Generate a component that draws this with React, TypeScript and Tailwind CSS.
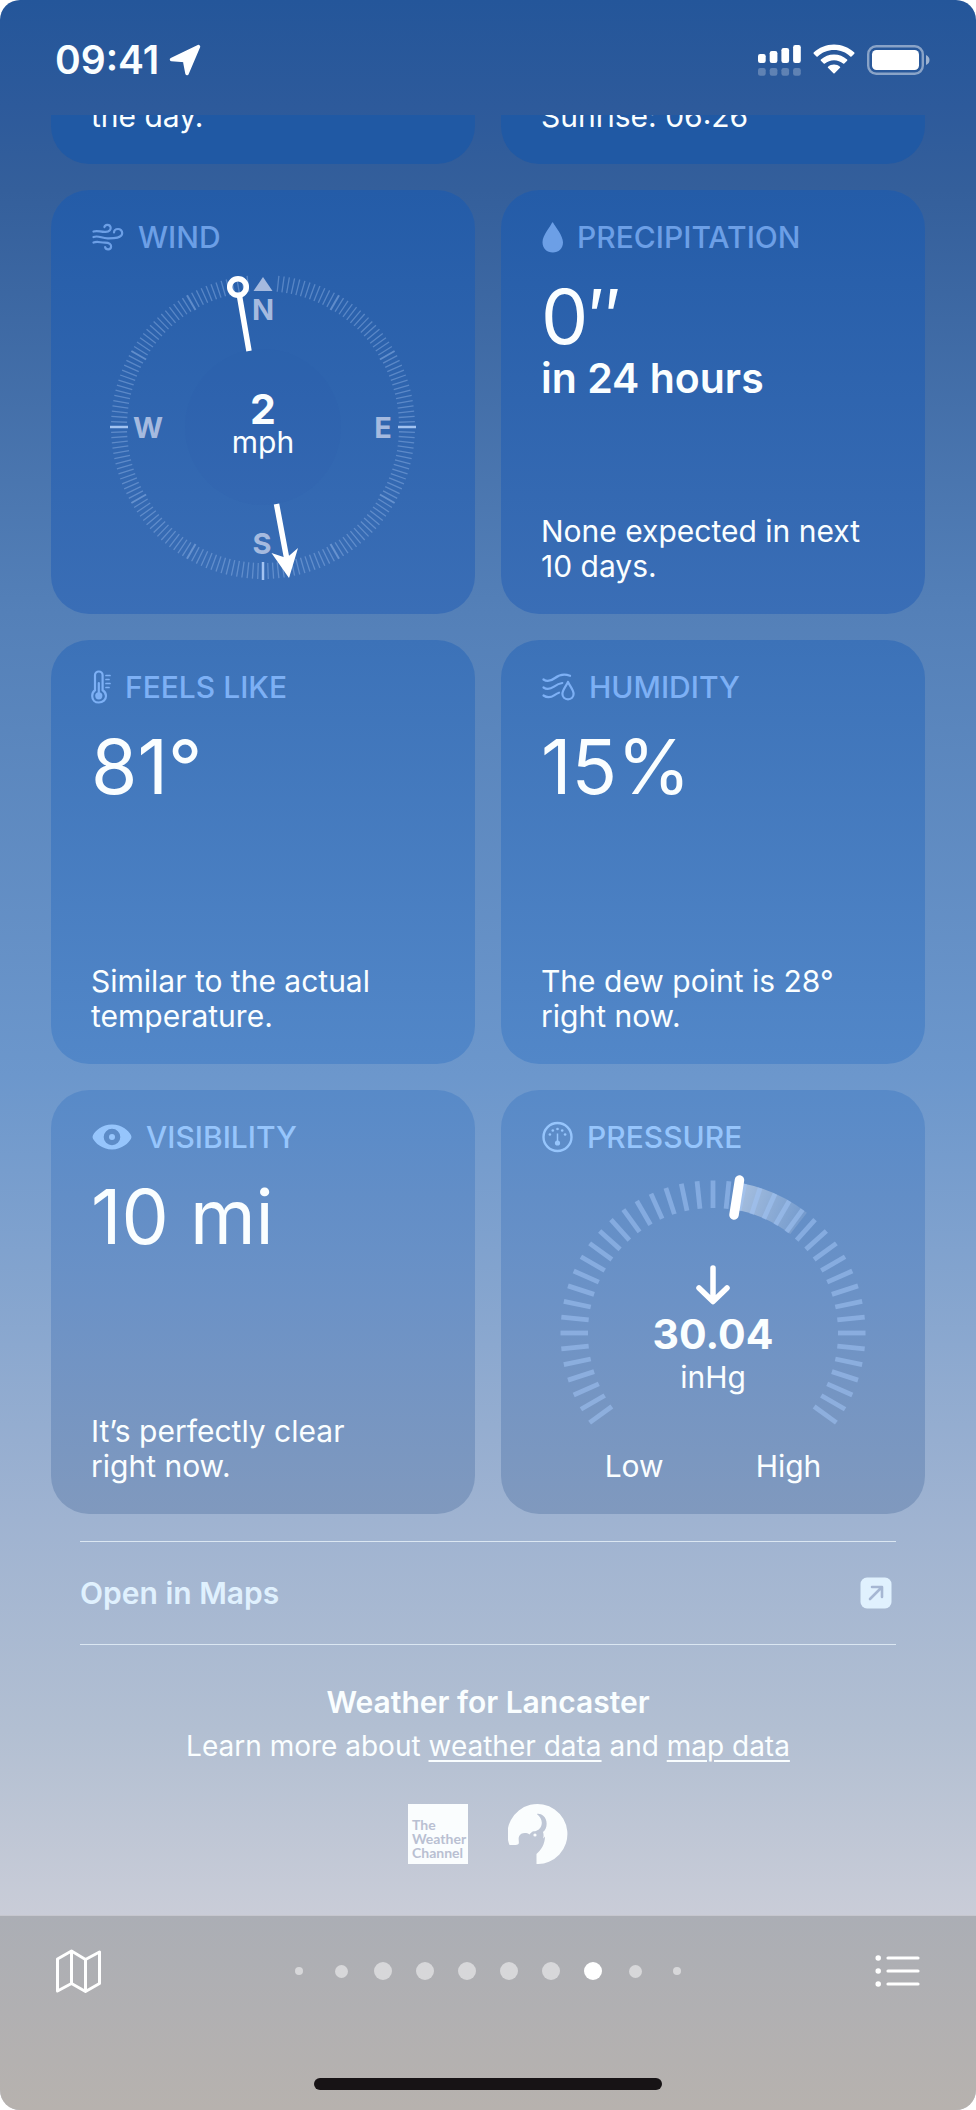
import type { ReactNode } from 'react'

type CardProps = {
  tone: string
  icon: ReactNode
  label: string
  labelColor: string
  children: ReactNode
}

type ReadingProps = {
  value: string
  note: string
  sub?: string
}

const point = (radius: number, degrees: number) => {
  const a = (degrees * Math.PI) / 180
  return [radius * Math.sin(a), -radius * Math.cos(a)]
}

function Tick({ angle, from, to, ...rest }: { angle: number; from: number; to: number; strokeWidth: number; opacity: number }) {
  const [x1, y1] = point(from, angle)
  const [x2, y2] = point(to, angle)
  return <line x1={x1} y1={y1} x2={x2} y2={y2} {...rest} />
}

/* ---------- icons ---------- */

function WindIcon() {
  return (
    <svg width="33" height="28" viewBox="0 0 33 28" fill="none" stroke="currentColor" strokeWidth="2.2" strokeLinecap="round">
      <path d="M2.5 8.6c4-1.6 7 .6 12 .3 4.4-.3 5.5-2.6 5.1-4.6-.4-1.8-2-2.6-3.5-2.5-1.4.1-2.4 1-2.7 2.3" />
      <path d="M2.5 14c5-1.9 8 1.3 14 1.4 7 .1 14.7-.4 14.7-5.3 0-2.5-1.900-4.100-4.200-4.100-2.200 0-3.900 1.500-4 3.500" />
      <path d="M2.5 19.600c4-1.700 6.500.1 11.500.1 4.500 0 6.300 1.800 6.100 4-.2 1.800-1.600 2.800-3.100 2.700-1.500 0-2.600-.9-2.900-2.300" />
    </svg>
  )
}

function DropIcon() {
  return (
    <svg width="22" height="31" viewBox="0 0 22 31" fill="currentColor">
      <path d="M12 .5C14 4.500 22 13.500 22 20.300C22 26.700 17.600 30.500 11.800 30.500S1.500 26.700 1.500 20.300C1.500 13.500 9.500 4.500 11 .8Q11.500 0 12 .5Z" />
    </svg>
  )
}

function ThermometerIcon() {
  return (
    <svg width="20" height="34" viewBox="1 0 20 34" fill="none" stroke="currentColor" strokeWidth="2.200" strokeLinecap="round">
      <path d="M5 20.200V5.200C5 3 6.700 1.500 8.800 1.500S12.600 3 12.600 5.200V20.200C14.900 21.600 16 23.500 16 25.900C16 29.700 12.800 32.500 8.800 32.500S2.200 29.700 2.200 25.900C2.200 23.500 2.800 21.600 5 20.200Z" />
      <path d="M8.800 13V23" />
      <circle cx="8.800" cy="25.800" r="3.600" fill="currentColor" stroke="none" />
      <path d="M16 5.500h4M16 9.500h3M16 13.500h4M16 17.500h3" strokeWidth="1.700" />
    </svg>
  )
}

function HumidityIcon() {
  return (
    <svg width="34" height="28" viewBox="0 0 34 28" fill="none" stroke="currentColor" strokeWidth="2.200" strokeLinecap="round" strokeLinejoin="round">
      <path d="M2.500 6.500c3.500 2.500 7.500 1.500 11.500-1.500 4.500-3.500 9-4.500 15-2.200" />
      <path d="M2.500 14.500c3.500 2.500 7 1.600 10.500-.8 2.800-2 5.300-3.300 8.300-3.700" />
      <path d="M2.500 22.500c4 2.700 7.500 2 11-.4 1.500-1 3-1.900 4.500-2.400" />
      <path d="M27 8.800c-1.600 4-5.600 8.300-5.600 12 0 3.300 2.400 5.500 5.600 5.500s5.600-2.200 5.600-5.500c0-3.700-4-8-5.600-12z" />
    </svg>
  )
}

function EyeIcon() {
  return (
    <svg width="41" height="26" viewBox="0 0 41 26">
      <path
        fill="currentColor"
        fillRule="evenodd"
        d="M21 .5C31 .5 38 7.200 40 11.200Q41 13 40 14.800C38 18.800 31 25.500 21 25.500S4 18.800 2 14.800Q1 13 2 11.200C4 7.200 11 .5 21 .5ZM21 4.700A8.300 8.300 0 1 0 21 21.300A8.300 8.300 0 1 0 21 4.700Z"
      />
      <circle cx="21" cy="13" r="3" fill="currentColor" />
    </svg>
  )
}

function GaugeIcon() {
  return (
    <svg width="32" height="32" viewBox="-17 -16 32 32" fill="none" stroke="currentColor" strokeWidth="2.400">
      <circle r="14" cx="-.5" />
      <path d="M-.5 -3.500V5" strokeWidth="1.500" />
      <circle cx="-.5" cy="6" r="2.600" fill="currentColor" stroke="none" />
      {[-72, -36, 0, 36, 72].map((a) => {
        const [x, y] = point(8, a)
        return <circle key={a} cx={x - 0.5} cy={y} r="1.300" fill="currentColor" stroke="none" />
      })}
    </svg>
  )
}

/* ---------- cards ---------- */

function Card({ tone, icon, label, labelColor, children }: CardProps) {
  return (
    <section className={`flex aspect-square flex-col rounded-[38px] px-10 pt-7 pb-[30px] ${tone}`}>
      <h2 className={`flex h-[38px] items-center gap-3.5 text-[30px] font-medium ${labelColor}`}>
        {icon}
        {label}
      </h2>
      {children}
    </section>
  )
}

function Reading({ value, note, sub }: ReadingProps) {
  return (
    <>
      <p className="mt-[21px] text-[75px] leading-[80px]">{value}</p>
      {sub && <p className="text-[41px] leading-[42px] font-semibold">{sub}</p>}
      <p className="mt-auto text-[30px] leading-[35px] whitespace-pre-line">{note}</p>
    </>
  )
}

function Compass() {
  const angles = Array.from({ length: 180 }, (_, i) => i * 2).filter((a) => a > 4 && a < 356)
  return (
    <div className="mt-[15px] grid place-items-center self-center">
      <svg className="col-start-1 row-start-1 size-[312px]" viewBox="-156 -156 312 312">
        <circle r="78" fill="#2459a6" opacity="0.07" />
        <g stroke="#a9c8f5">
          {angles.map((a) => {
            if (a % 90 === 0) return <Tick key={a} angle={a} from={135} to={153} strokeWidth={2.5} opacity={0.95} />
            if (a % 30 === 0) return <Tick key={a} angle={a} from={135} to={152} strokeWidth={2} opacity={0.42} />
            return <Tick key={a} angle={a} from={136} to={152} strokeWidth={1.3} opacity={0.36} />
          })}
        </g>
        <g fill="#a5badf" className="text-[29px] font-bold" textAnchor="middle">
          <path d="M0 -150L9.500 -136H-9.500Z" />
          <text x="0" y="-107">N</text>
          <text x="120" y="11">E</text>
          <text x="-1" y="127">S</text>
          <text x="-115" y="11">W</text>
        </g>
        <g stroke="white" strokeWidth="5.500" fill="none">
          <circle cx="-25" cy="-140" r="8.300" />
          <path d="M-23.500 -131L-14 -76M13.500 77L24 133" />
          <path d="M26 151L8.500 126L23.500 131L35 121Z" fill="white" stroke="none" />
        </g>
      </svg>
      <p className="col-start-1 row-start-1 flex flex-col items-center pb-1.5">
        <span className="text-[41px] leading-[36px] font-bold">2</span>
        <span className="text-[30px] leading-[30px]">mph</span>
      </p>
    </div>
  )
}

function Barometer() {
  const [ax, ay] = point(139, 11)
  const [bx, by] = point(139, 38)
  return (
    <>
      <div className="mt-[17px] grid justify-items-center self-center">
        <svg className="col-start-1 row-start-1 h-[272px] w-80" viewBox="-160 -160 320 272">
          <defs>
            <linearGradient id="band" gradientUnits="userSpaceOnUse" x1={ax} y1={ay} x2={bx} y2={by}>
              <stop offset="0" stopColor="white" stopOpacity="0.42" />
              <stop offset="1" stopColor="white" stopOpacity="0.12" />
            </linearGradient>
          </defs>
          <path d={`M${ax} ${ay}A139 139 0 0 1 ${bx} ${by}`} stroke="url(#band)" strokeWidth="27" fill="none" />
          <g stroke="#a3c6f7">
            {Array.from({ length: 43 }, (_, i) => -126 + i * 6).map((a) => (
              <Tick key={a} angle={a} from={125} to={152.5} strokeWidth={4.8} opacity={0.52} />
            ))}
          </g>
          <path d="M26.500 -153L21 -118" stroke="white" strokeWidth="9.500" strokeLinecap="round" />
        </svg>
        <div className="col-start-1 row-start-1 flex flex-col items-center self-end pb-[46px]">
          <svg className="mb-2" width="34" height="40" viewBox="0 0 34 40" fill="none" stroke="white" strokeWidth="5.500" strokeLinecap="round" strokeLinejoin="round">
            <path d="M17 3V36M3 23L17 36.500L31 23" />
          </svg>
          <span className="text-[41px] leading-[42px] font-bold">30.04</span>
          <span className="text-[30px] leading-[44px]">inHg</span>
        </div>
      </div>
      <p className="mt-auto flex justify-center gap-[92px] text-[30px] leading-[35px]">
        <span>Low</span>
        <span>High</span>
      </p>
    </>
  )
}

/* ---------- bars ---------- */

function StatusBar() {
  return (
    <header className="flex h-[115px] items-center justify-between pt-1 pr-[46px] pl-[55px]">
      <div className="flex items-center gap-2.5">
        <span className="text-[39px] leading-[40px] font-semibold">09:41</span>
        <svg width="32" height="32" viewBox="0 0 32 32" fill="white" stroke="white" strokeWidth="3.500" strokeLinejoin="round">
          <path d="M29.500 2.500L2.500 15.500L15.500 16.500L18 29.500Z" />
        </svg>
      </div>
      <div className="flex items-center gap-3">
        <svg width="43" height="32" viewBox="0 0 43 32" fill="white">
          {[9, 12, 15, 18].map((h, i) => (
            <g key={h}>
              <rect x={i * 11.7} y={19 - h} width="7.700" height={h} rx="2.200" />
              <rect x={i * 11.7} y="24" width="7.700" height="7.700" rx="2.200" opacity="0.25" />
            </g>
          ))}
        </svg>
        <svg width="42" height="31" viewBox="0 0 42 31" fill="white">
          <path d="M21 .5C13.200 .5 6 3.500 .7 8.600Q.2 9.200 .7 9.800L3.500 12.500Q4.100 13.100 4.700 12.500C9 8.500 14.700 6.100 21 6.100S33 8.500 37.300 12.500Q37.900 13.100 38.500 12.500L41.300 9.800Q41.800 9.200 41.300 8.600C36 3.500 28.800 .5 21 .5Z" />
          <path d="M21 10.600C16 10.600 11.400 12.500 7.900 15.600Q7.300 16.200 7.900 16.800L10.700 19.600Q11.300 20.100 11.900 19.600C14.300 17.500 17.500 16.200 21 16.200S27.700 17.500 30.100 19.600Q30.700 20.100 31.300 19.600L34.100 16.800Q34.700 16.200 34.100 15.600C30.600 12.500 26 10.600 21 10.600Z" />
          <path d="M21 20.500C18.700 20.500 16.600 21.300 15 22.700Q14.400 23.200 15 23.800L20.400 29.200Q21 29.800 21.600 29.200L27 23.800Q27.600 23.200 27 22.700C25.400 21.300 23.300 20.500 21 20.500Z" />
        </svg>
        <svg width="63" height="30" viewBox="0 0 63 30">
          <rect x="1.200" y="1.200" width="54.600" height="27.600" rx="8" fill="none" stroke="white" strokeWidth="2.400" opacity="0.45" />
          <rect x="5" y="5" width="47" height="20" rx="4.500" fill="white" />
          <path d="M59 10C61.500 11 62.500 13 62.500 15S61.500 19 59 20Z" fill="white" opacity="0.55" />
        </svg>
      </div>
    </header>
  )
}

const dots = [
  'size-2 bg-white/50',
  'size-[13px] bg-white/50',
  'size-[18px] bg-white/50',
  'size-[18px] bg-white/50',
  'size-[18px] bg-white/50',
  'size-[18px] bg-white/50',
  'size-[18px] bg-white/50',
  'size-[18px] bg-white',
  'size-[13px] bg-white/50',
  'size-2 bg-white/50',
]

function Toolbar() {
  return (
    <nav className="border-t border-[#c6c7ce] bg-linear-to-b from-[#abaeb5] via-[#b1b0b2] to-[#b7b2ae] pb-5">
      <div className="flex h-[110px] items-center justify-between px-[55px]">
        <button type="button" aria-label="Map">
          <svg width="47" height="46" viewBox="0 0 47 46" fill="none" stroke="white" strokeWidth="3" strokeLinejoin="round">
            <path d="M2.500 11L16.500 3L30.500 11.500L44.500 4V35.500L30.500 43.500L16.500 35.500L2.500 43Z" />
            <path d="M16.500 3V35.500M30.500 11.500V43.500" />
          </svg>
        </button>
        <div className="flex items-center">
          {dots.map((dot, i) => (
            <span key={i} className="grid w-[42px] place-items-center">
              <span className={`rounded-full ${dot}`} />
            </span>
          ))}
        </div>
        <button type="button" aria-label="Locations">
          <svg width="47" height="36" viewBox="0 0 47 36" fill="none" stroke="white" strokeWidth="3.200" strokeLinecap="round">
            <path d="M14 5H44M14 18H44M14 31H44" />
            <path d="M4.200 5h.01M4.200 18h.01M4.200 31h.01" strokeWidth="5.500" />
          </svg>
        </button>
      </div>
      <div className="mx-auto mt-[52px] h-3 w-[348px] rounded-full bg-[#171315]" />
    </nav>
  )
}

function Logos() {
  return (
    <div className="mt-9 flex justify-center gap-10">
      <div className="flex size-[60px] flex-col justify-end bg-[#fafdfe] px-1 pb-1 font-[Lato,sans-serif] text-[14px] leading-[14px] font-bold text-[#b9c0d2]">
        <span>The</span>
        <span>Weather</span>
        <span>Channel</span>
      </div>
      <svg width="60" height="60" viewBox="0 0 60 60">
        <path
          fill="#fafdfe"
          d="M1.500 41A30 30 0 1 1 28.500 60V50C33.500 45.500 36.800 40 37 32.500L35 34.500C36 31.500 35.500 29.500 35 28C39.500 24.500 40 16 35.500 12C33.500 10.300 31 9.500 28.800 10C33 13 34.500 17.500 33.500 21C32.500 25 29 27.300 25.500 27.300C23.500 28 22.500 29.200 21.500 30.500C18 28 12.500 28.800 11 32.500C10 35.500 11.500 38 10.500 40C8.500 41.800 4 40.500 1.500 41Z"
        />
        <circle cx="27" cy="31" r="1.600" fill="#fafdfe" />
      </svg>
    </div>
  )
}

export default function App() {
  return (
    <main className="overflow-hidden rounded-[20px] bg-[linear-gradient(to_bottom,#24569a_0%,#2d5a9b_5%,#345f9b_9%,#5480b8_29%,#6c97cc_51%,#9fb3d1_72%,#b2bfd2_82%,#cacdd8_91%)] font-[Inter,sans-serif] text-[#fafeff]">
      <StatusBar />

      {/* the previous row, scrolled under the status bar */}
      <div className="flex h-[49px] flex-col justify-end overflow-hidden px-[51px]">
        <div className="grid shrink-0 grid-cols-2 gap-[26px] text-[30px] leading-[35px]">
          <p className="flex aspect-square items-end rounded-[38px] bg-[#2059a4] px-10 pb-[30px]">the day.</p>
          <p className="flex aspect-square items-end rounded-[38px] bg-[#2059a4] px-10 pb-[30px]">Sunrise: 06:26</p>
        </div>
      </div>

      <div className="mt-[26px] grid grid-cols-2 gap-[26px] px-[51px]">
        <Card tone="bg-linear-to-b from-[#245ca8] to-[#3a6eb6]" labelColor="text-[#6c9fe6]" icon={<WindIcon />} label="WIND">
          <Compass />
        </Card>
        <Card tone="bg-linear-to-b from-[#245ca8] to-[#3a6eb6]" labelColor="text-[#6c9fe6]" icon={<DropIcon />} label="PRECIPITATION">
          <Reading value="0″" sub="in 24 hours" note={'None expected in next\n10 days.'} />
        </Card>
        <Card tone="bg-linear-to-b from-[#3c72b8] to-[#5287c8]" labelColor="text-[#7db0f5]" icon={<ThermometerIcon />} label="FEELS LIKE">
          <Reading value="81°" note={'Similar to the actual\ntemperature.'} />
        </Card>
        <Card tone="bg-linear-to-b from-[#3c72b8] to-[#5287c8]" labelColor="text-[#7db0f5]" icon={<HumidityIcon />} label="HUMIDITY">
          <Reading value="15%" note={'The dew point is 28°\nright now.'} />
        </Card>
        <Card tone="bg-linear-to-b from-[#588ac8] via-[#6c92c6] to-[#8099be]" labelColor="text-[#96c5fc]" icon={<EyeIcon />} label="VISIBILITY">
          <Reading value="10 mi" note={'It’s perfectly clear\nright now.'} />
        </Card>
        <Card tone="bg-linear-to-b from-[#588ac8] via-[#6c92c6] to-[#8099be]" labelColor="text-[#96c5fc]" icon={<GaugeIcon />} label="PRESSURE">
          <Barometer />
        </Card>
      </div>

      <footer className="mt-[27px] px-20 pb-[51px]">
        <a href="#maps" className="flex h-[104px] items-center justify-between border-y border-[#dbe7f2] pr-1 text-[30px] font-semibold text-[#e0f1fe]">
          Open in Maps
          <svg width="32" height="32" viewBox="0 0 32 32" fill="none">
            <rect x=".5" y=".5" width="31" height="31" rx="6.500" fill="#e0f1fe" />
            <path d="M10 22L21.500 10.500M12 10H22V20" stroke="#a6b7d3" strokeWidth="2.600" strokeLinecap="round" strokeLinejoin="round" />
          </svg>
        </a>
        <div className="pt-[35px] text-center leading-[44px]">
          <p className="text-[30px] font-semibold">Weather for Lancaster</p>
          <p className="text-[28px]">
            Learn more about{' '}
            <a href="#weather-data" className="underline decoration-2 underline-offset-4">weather data</a> and{' '}
            <a href="#map-data" className="underline decoration-2 underline-offset-4">map data</a>
          </p>
        </div>
        <Logos />
      </footer>

      <Toolbar />
    </main>
  )
}
